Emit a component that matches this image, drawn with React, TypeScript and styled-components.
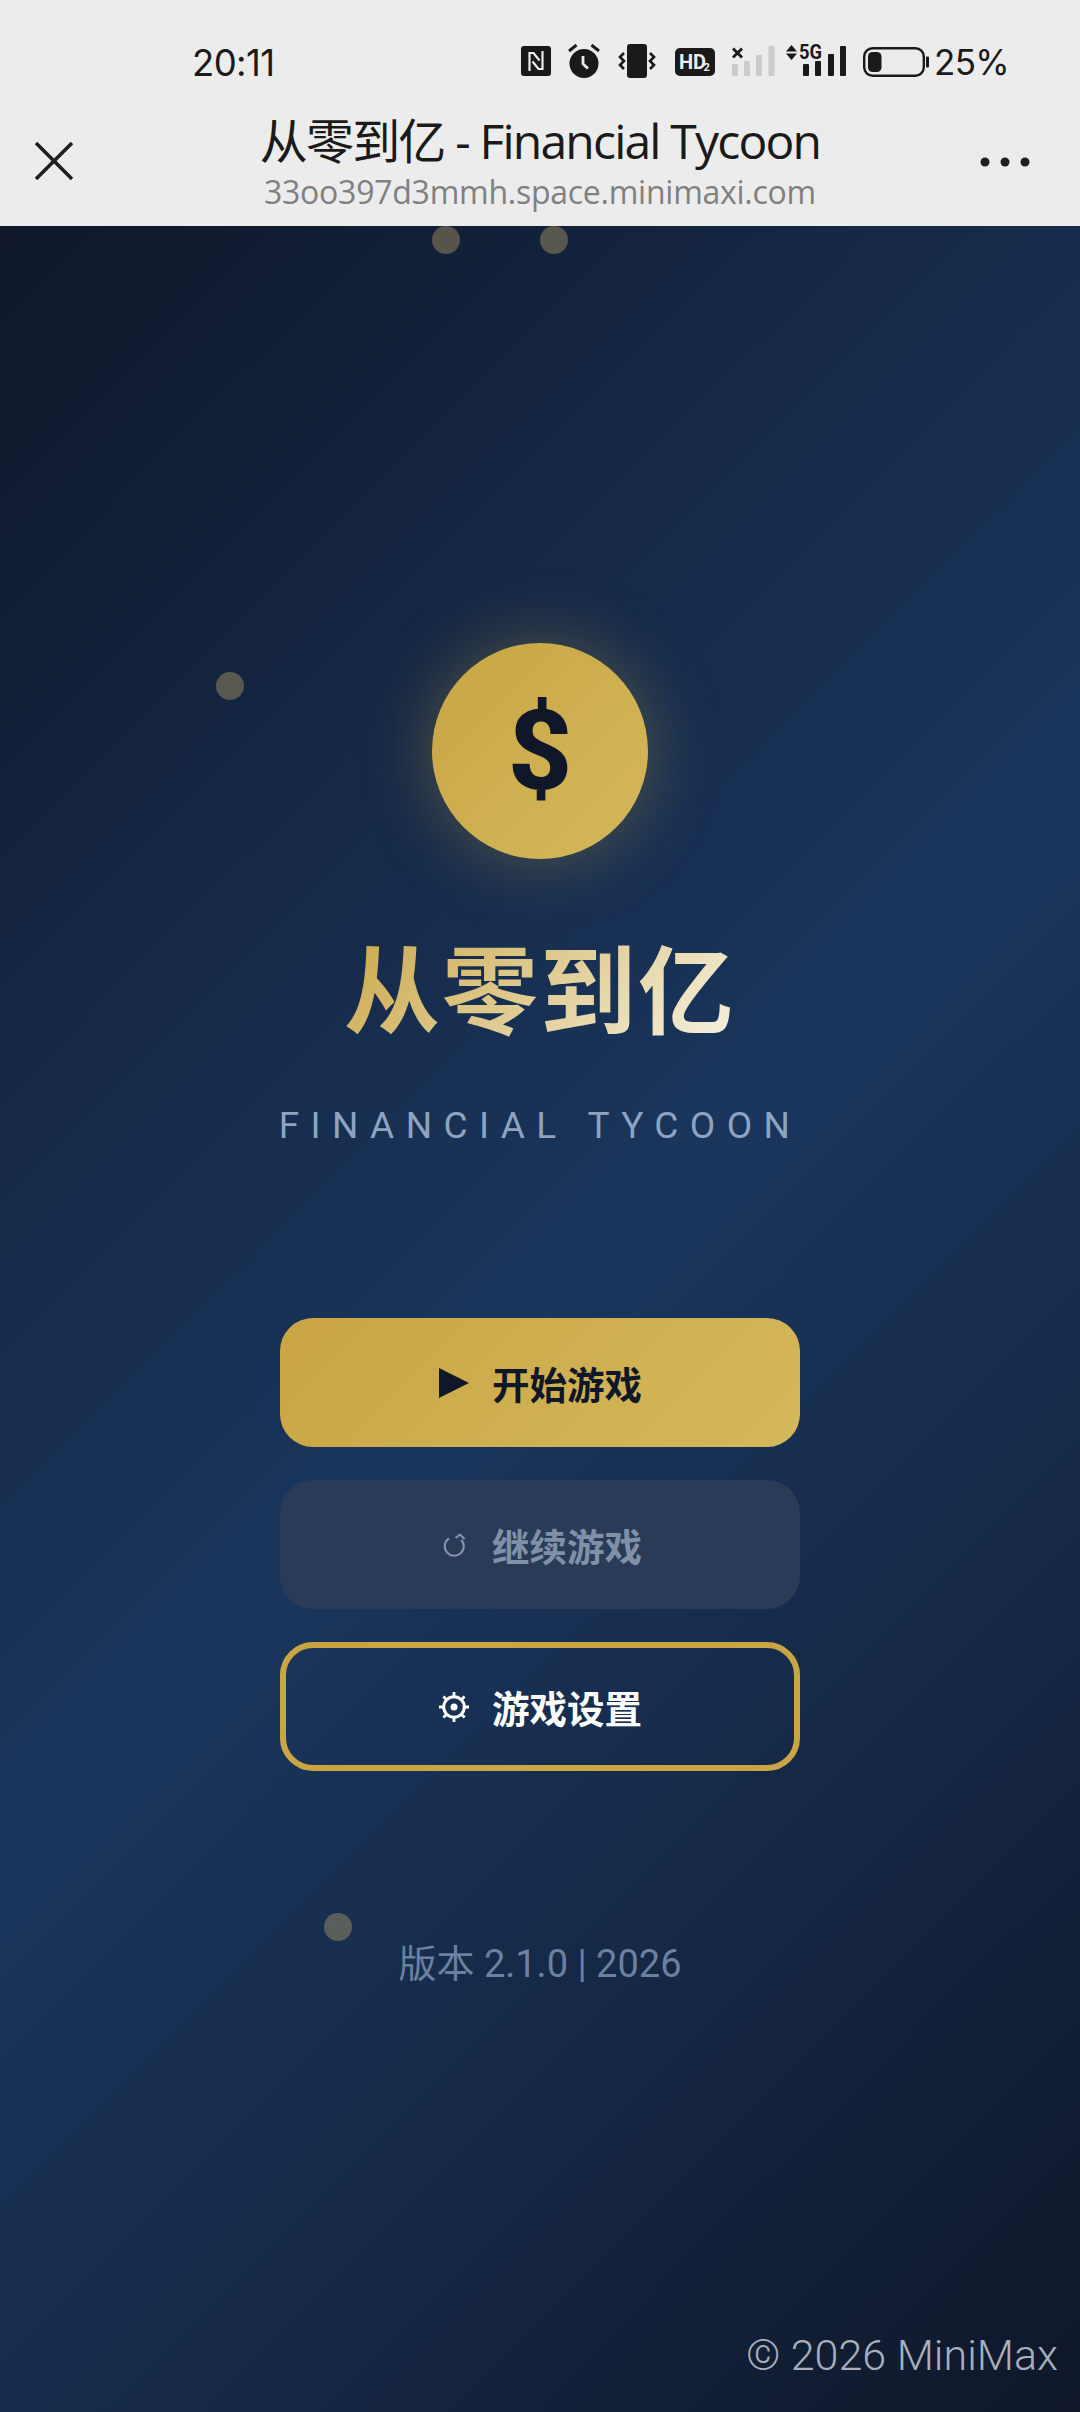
import React from 'react'
import styled, { createGlobalStyle } from 'styled-components'

const GlobalStyle = createGlobalStyle`
  html, body {
    margin: 0;
    padding: 0;
    background: #0f1729;
  }
  * {
    box-sizing: border-box;
  }
`

const CJK = `"Noto Sans CJK SC", sans-serif`

const Page = styled.div`
  width: 1080px;
  height: 2412px;
  display: flex;
  flex-direction: column;
  overflow: hidden;
  font-family: Roboto, ${CJK};
`

const TopChrome = styled.header`
  height: 226px;
  flex: none;
  background: #ececec;
  color: #1a1a1a;
  display: flex;
  flex-direction: column;
`

const StatusBar = styled.div`
  height: 107px;
  flex: none;
  padding: 44px 71px 0 192px;
  display: flex;
  justify-content: space-between;
  align-items: flex-start;
`

const Clock = styled.span`
  margin-top: 2px;
  font-size: 36.5px;
  line-height: 34px;
  font-family: Inter, sans-serif;
  letter-spacing: -0.6px;
`

const StatusIcons = styled.div`
  display: flex;
  align-items: flex-start;
`

const StatusIcon = styled.svg<{ $left: number }>`
  display: block;
  margin-left: ${({ $left }) => $left}px;
  flex: none;
`

const Percent = styled.span`
  margin: 2px 0 0 5px;
  font-family: Inter, sans-serif;
  font-size: 35px;
  line-height: 32px;
  letter-spacing: -0.7px;
`

const TitleRow = styled.div`
  flex: 1;
  display: grid;
  grid-template-columns: 100px 1fr 100px;
  align-items: start;
`

const CloseIcon = styled.svg`
  margin: 35px 0 0 35px;
`

const MoreIcon = styled.svg`
  margin-top: 50px;
`

const TitleBlock = styled.div`
  display: flex;
  flex-direction: column;
  align-items: center;
`

const PageTitle = styled.div`
  font-family: "Open Sans", ${CJK};
  font-size: 48px;
  line-height: 60px;
  margin-top: 4px;
  letter-spacing: -1.8px;
  white-space: nowrap;
`

const PageUrl = styled.div`
  font-family: "Open Sans", sans-serif;
  font-size: 32px;
  line-height: 42px;
  color: #808080;
  letter-spacing: -0.25px;
  white-space: nowrap;
`

const Stage = styled.main`
  position: relative;
  flex: 1;
  background: linear-gradient(135deg, #0f1729 0%, #1a365d 50%, #0f1729 100%);
  display: flex;
  flex-direction: column;
  align-items: center;
  padding-top: 417px;
`

const Particle = styled.span<{ $x: number; $y: number }>`
  position: absolute;
  left: ${({ $x }) => $x}px;
  top: ${({ $y }) => $y}px;
  width: 28px;
  height: 28px;
  border-radius: 50%;
  background: #c9ae6c;
  opacity: 0.38;
`

const Coin = styled.div`
  width: 216px;
  height: 216px;
  border-radius: 50%;
  background: linear-gradient(135deg, #c9a544, #d4b85c);
  box-shadow: 0 0 70px rgba(201, 165, 68, 0.35);
  display: flex;
  align-items: center;
  justify-content: center;
  color: #0f1729;
  font-family: Roboto, sans-serif;
  font-weight: 800;
  font-size: 112px;
  line-height: 1;
`

const GameTitle = styled.h1`
  margin: 61px 0 0;
  font-family: ${CJK};
  font-weight: 700;
  font-size: 96px;
  line-height: 130px;
  letter-spacing: 2px;
  background: linear-gradient(135deg, #c9a544 0%, #f7f3e3 100%);
  -webkit-background-clip: text;
  background-clip: text;
  color: transparent;
`

const Subtitle = styled.div`
  margin-top: 54px;
  font-family: Roboto, sans-serif;
  font-size: 37px;
  line-height: 44px;
  letter-spacing: 11.4px;
  color: #8ea3c2;
  white-space: nowrap;
`

const Menu = styled.nav`
  margin-top: 170px;
  width: 520px;
  display: flex;
  flex-direction: column;
  gap: 33px;
`

const MenuButton = styled.button<{ $kind: 'primary' | 'disabled' | 'outline' }>`
  height: 129px;
  width: 100%;
  border-radius: 33px;
  display: flex;
  align-items: center;
  justify-content: center;
  gap: 22px;
  padding: 0;
  font-family: ${CJK};
  font-weight: 700;
  font-size: 37.5px;
  background: ${({ $kind }) =>
    $kind === 'primary'
      ? 'linear-gradient(135deg, #c9a544, #d4b85c)'
      : $kind === 'disabled'
        ? '#2a3b58'
        : 'transparent'};
  color: ${({ $kind }) =>
    $kind === 'primary' ? '#0f1729' : $kind === 'disabled' ? '#8090a8' : '#ffffff'};
  border: ${({ $kind }) => ($kind === 'outline' ? '6px solid #c9a544' : 'none')};
`

const ButtonIcon = styled.svg`
  flex: none;
`

const Version = styled.div`
  margin-top: 171px;
  font-size: 38px;
  line-height: 44px;
  color: #6c809f;
`

const Watermark = styled.div`
  position: absolute;
  right: 22px;
  bottom: 30px;
  font-family: Roboto, sans-serif;
  font-weight: 300;
  font-size: 43px;
  line-height: 54px;
  color: #a8afba;
  white-space: nowrap;
`

const particles = [
  { x: 432, y: 0 },
  { x: 540, y: 0 },
  { x: 216, y: 446 },
  { x: 324, y: 1687 },
]

export default function App() {
  return (
    <Page>
      <GlobalStyle />
      <TopChrome>
        <StatusBar>
          <Clock>20:11</Clock>
          <StatusIcons>
            {/* nfc */}
            <StatusIcon $left={0} width="30" height="34" viewBox="0 0 30 34">
              <rect x="0" y="2" width="30" height="30" rx="3" fill="#1a1a1a" />
              <path d="M8.5 27V9h4l6 7.5" fill="none" stroke="#ececec" strokeWidth="2.2" />
              <path d="M21.5 7v18h-4l-6-7.5" fill="none" stroke="#ececec" strokeWidth="2.2" />
            </StatusIcon>
            {/* alarm */}
            <StatusIcon $left={17} width="32" height="34" viewBox="0 0 32 34">
              <circle cx="16" cy="19.5" r="14.5" fill="#1a1a1a" />
              <path d="M8.5 1 1 7M23.5 1 31 7" stroke="#1a1a1a" strokeWidth="3" />
              <path d="M15 12v8l5 4.5" fill="none" stroke="#ececec" strokeWidth="2.8" />
            </StatusIcon>
            {/* vibrate */}
            <StatusIcon $left={18} width="38" height="34" viewBox="0 0 38 34">
              <rect x="9" y="0" width="20" height="34" rx="3" fill="#1a1a1a" />
              <path d="M6 9 2 13l4 4-4 4 4 4M32 9l4 4-4 4 4 4-4 4" fill="none" stroke="#1a1a1a" strokeWidth="2.6" />
            </StatusIcon>
            {/* hd */}
            <StatusIcon $left={19} width="40" height="34" viewBox="0 0 40 34">
              <rect y="4" width="40" height="28" rx="5" fill="#1a1a1a" />
              <text x="4" y="25" fontFamily="Roboto, sans-serif" fontWeight="700" fontSize="20" fill="#ececec">HD</text>
              <text x="28.5" y="27" fontFamily="Roboto, sans-serif" fontWeight="700" fontSize="11" fill="#ececec">2</text>
            </StatusIcon>
            {/* sim 1, no signal */}
            <StatusIcon $left={17} width="43" height="34" viewBox="0 0 43 34">
              <path d="M1 4.5l9 9M10 4.5l-9 9" stroke="#1a1a1a" strokeWidth="2.8" />
              <rect x="0" y="20" width="6" height="12" rx="1" fill="#cccccc" />
              <rect x="12" y="17" width="6" height="15" rx="1" fill="#cccccc" />
              <rect x="24" y="11" width="6" height="21" rx="1" fill="#cccccc" />
              <rect x="36.5" y="2" width="6" height="30" rx="1" fill="#cccccc" />
            </StatusIcon>
            {/* sim 2, 5g */}
            <StatusIcon $left={11} width="60" height="34" viewBox="0 0 60 34">
              <path d="M0 7.5 5.5 1l5.5 6.5zM0 9.5h11L5.5 16z" fill="#1a1a1a" />
              <text x="13" y="15" fontFamily="Roboto, sans-serif" fontWeight="700" fontSize="19.5" textLength="23" lengthAdjust="spacingAndGlyphs" fill="#1a1a1a">5G</text>
              <rect x="17" y="20" width="6" height="12" rx="1" fill="#1a1a1a" />
              <rect x="29" y="17" width="6" height="15" rx="1" fill="#1a1a1a" />
              <rect x="42" y="10" width="6" height="22" rx="1" fill="#1a1a1a" />
              <rect x="54" y="2" width="6" height="30" rx="1" fill="#1a1a1a" />
            </StatusIcon>
            {/* battery */}
            <StatusIcon $left={17} width="66" height="34" viewBox="0 0 66 34">
              <rect x="1.2" y="4.2" width="59.6" height="27.6" rx="8.5" fill="none" stroke="#1a1a1a" strokeWidth="2.4" />
              <rect x="5" y="8" width="13.5" height="20" rx="4.5" fill="#1a1a1a" />
              <rect x="63" y="12.5" width="3" height="11" rx="1" fill="#1a1a1a" />
            </StatusIcon>
            <Percent>25%</Percent>
          </StatusIcons>
        </StatusBar>
        <TitleRow>
          <CloseIcon width="38" height="38" viewBox="0 0 38 38">
            <path d="M1 1l36 36M37 1 1 37" stroke="#1f1f1f" strokeWidth="3.6" />
          </CloseIcon>
          <TitleBlock>
            <PageTitle>从零到亿 - Financial Tycoon</PageTitle>
            <PageUrl>33oo397d3mmh.space.minimaxi.com</PageUrl>
          </TitleBlock>
          <MoreIcon width="50" height="10" viewBox="0 0 50 10">
            <circle cx="5" cy="5" r="4.5" fill="#1f1f1f" />
            <circle cx="25" cy="5" r="4.5" fill="#1f1f1f" />
            <circle cx="45" cy="5" r="4.5" fill="#1f1f1f" />
          </MoreIcon>
        </TitleRow>
      </TopChrome>

      <Stage>
        {particles.map((p) => (
          <Particle key={`${p.x}-${p.y}`} $x={p.x} $y={p.y} />
        ))}
        <Coin>$</Coin>
        <GameTitle>从零到亿</GameTitle>
        <Subtitle>FINANCIAL TYCOON</Subtitle>
        <Menu>
          <MenuButton $kind="primary">
            <ButtonIcon width="32" height="30" viewBox="0 0 32 30">
              <path d="M1 0l30 15L1 30z" fill="#0f1729" />
            </ButtonIcon>
            开始游戏
          </MenuButton>
          <MenuButton $kind="disabled">
            <ButtonIcon width="32" height="30" viewBox="0 0 32 30">
              <path d="M11 8.3A9.5 9.5 0 1 0 23.3 9.8M17.5 8l4.5-3.5 4.5 4.5" fill="none" stroke="#8796ae" strokeWidth="2" />
            </ButtonIcon>
            继续游戏
          </MenuButton>
          <MenuButton $kind="outline">
            <ButtonIcon width="32" height="32" viewBox="0 0 32 32">
              <circle cx="16" cy="16" r="10.3" fill="none" stroke="#fff" strokeWidth="3" />
              <circle cx="16" cy="16" r="3.5" fill="#fff" />
              <path d="M16 1v5M16 26v5M1 16h5M26 16h5M5.4 5.4l3 3M23.6 23.6l3 3M26.6 5.4l-3 3M8.4 23.6l-3 3" stroke="#fff" strokeWidth="2.8" />
            </ButtonIcon>
            游戏设置
          </MenuButton>
        </Menu>
        <Version>版本 2.1.0 | 2026</Version>
        <Watermark>© 2026 MiniMax</Watermark>
      </Stage>
    </Page>
  )
}
